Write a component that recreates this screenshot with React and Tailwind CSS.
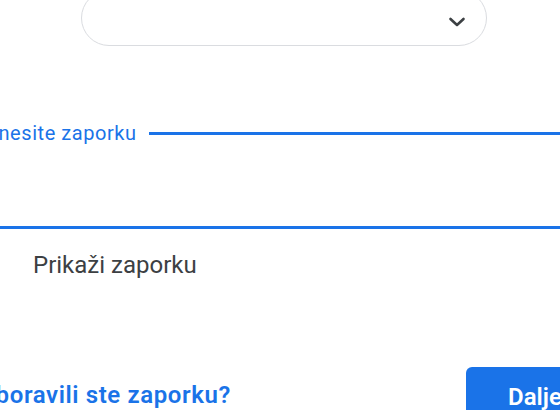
export default function App() {
  return (
    <div
      className="w-[560px] h-[410px] overflow-hidden bg-white flex flex-col"
      style={{ fontFamily: 'Roboto, "Liberation Sans", sans-serif' }}
    >
      {/* account pill */}
      <div className="ml-[81px] mt-[-10px] w-[406px] h-[56px] shrink-0 rounded-[28px] border border-[#dadce0] flex items-center justify-end pr-[20px] pt-[8px]">
        <svg width="18" height="12" viewBox="0 0 18 12" fill="none">
          <path d="M2.5 3 L9 9 L15.5 3" stroke="#3c4043" strokeWidth="2.6" strokeLinecap="round" strokeLinejoin="round" />
        </svg>
      </div>

      {/* password field */}
      <div className="mt-[77px] ml-[-15px] w-[600px] shrink-0 flex flex-col border-b-[3px] border-[#1a73e8]">
        <div className="flex items-center h-[20px]">
          <span className="text-[20px] leading-[20px] tracking-[0.55px] text-[#1a73e8] whitespace-nowrap">Unesite zaporku</span>
          <div className="ml-[12px] flex-1 h-[3px] bg-[#1a73e8]" />
        </div>
        <div className="h-[83px]" />
      </div>

      {/* show password */}
      <div className="mt-[22px] ml-[33px] text-[24px] leading-[28px] text-[#3c4043] whitespace-nowrap">
        Prikaži zaporku
      </div>

      {/* bottom row */}
      <div className="mt-[88px] flex items-start shrink-0">
        <span className="ml-[-33px] mt-[14px] text-[24px] leading-[28px] tracking-[0.6px] font-semibold text-[#1a73e8] whitespace-nowrap">
          Zaboravili ste zaporku?
        </span>
        <div className="flex-1" />
        <div className="w-[120px] mr-[-26px] h-[60px] rounded-[6px] bg-[#1a73e8] pl-[42px] flex items-center text-white text-[24px] font-semibold">
          Dalje
        </div>
      </div>
    </div>
  );
}
